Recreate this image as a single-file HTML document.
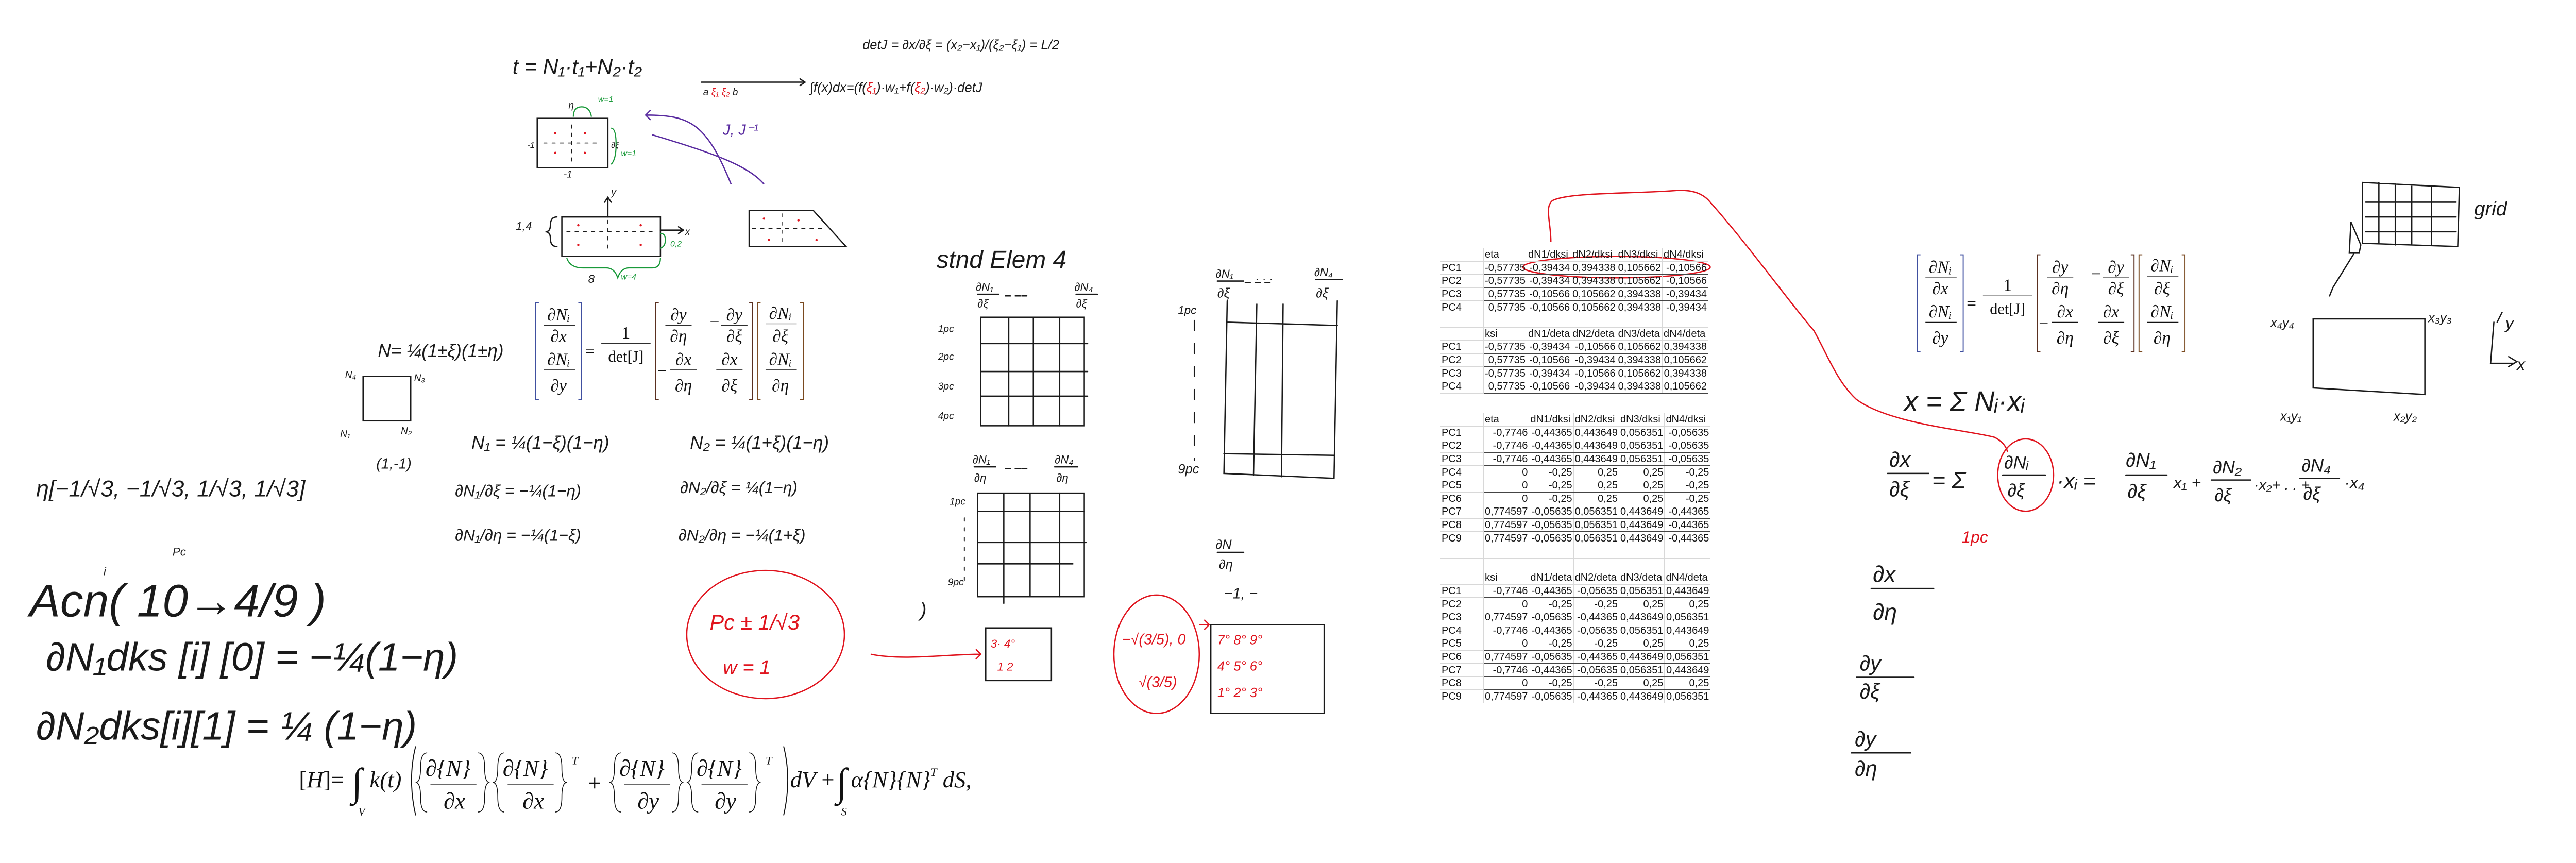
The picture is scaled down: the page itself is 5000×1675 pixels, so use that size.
<!DOCTYPE html>
<html><head><meta charset="utf-8">
<style>
html,body{margin:0;padding:0;background:#fff;}
body{width:5000px;height:1675px;overflow:hidden;position:relative;}
svg{position:absolute;left:0;top:0;}
.hw{font-family:"Liberation Sans",sans-serif;font-style:italic;fill:#1a1a1a;}
.tm{font-family:"Liberation Serif",serif;fill:#111;}
.r{fill:#e0141e;}
.g{fill:#1a9a3a;}
table{position:absolute;border-collapse:collapse;font-family:"Liberation Sans Narrow","Liberation Sans",sans-serif;font-size:20px;color:#111;}
td{height:24.6px;padding:0 2px;border:1px solid #d8d8d8;text-align:right;white-space:nowrap;line-height:24px;}
td.v{border-left:1.5px solid #333;border-bottom:1px solid #444;}
td.l{text-align:left;}
td:nth-child(1){width:79px;}
td:nth-child(2){width:79px;}
td:nth-child(3){width:80px;}
td:nth-child(4){width:81px;}
td:nth-child(5){width:80px;}
td:nth-child(6){width:84px;}
</style></head><body>
<svg width="5000" height="1675" viewBox="0 0 1568 525" preserveAspectRatio="none" xmlns="http://www.w3.org/2000/svg">
<g fill="none" stroke="#1a1a1a" stroke-width="0.8" stroke-linecap="round">
<rect x="327" y="72" width="43" height="30"/>
<path d="M348,76 v22 M331,87 h35" stroke-dasharray="2,3" stroke-width="0.5"/>
<rect x="342" y="132" width="60" height="24"/>
<path d="M345,141 h55 M370,134 v20" stroke-dasharray="2,3" stroke-width="0.5"/>
<path d="M370,132 v-12 M368,123 l2,-3 l2,3 M402,140 h14 M413,138 l3,2 l-3,2"/>
<path d="M339,132 q-4,0 -4,5 q0,4 -3,4 q3,0 3,4 q0,5 4,5"/>
<path d="M456,128 L495,128 L515,150 L456,150 Z"/>
<path d="M476,130 v18 M458,139 h45" stroke-dasharray="2,3" stroke-width="0.5"/>
<rect x="221" y="229" width="29" height="27"/>
<path d="M427,50 L490,50 M487,48 l3,2 l-3,2"/>
<rect x="597" y="193" width="63" height="66"/>
<path d="M614,193 v66 M629,193 v66 M645,193 v66 M597,209 h65 M597,226 h65 M597,241 h65"/>
<rect x="595" y="300" width="65" height="63"/>
<path d="M611,300 v67 M627,300 v63 M645,300 v63 M595,311 h65 M595,330 h66 M595,343 h58"/>
<path d="M587,315 v40" stroke-dasharray="2,4" stroke-width="0.6"/>
<path d="M747,183 L745,288 L812,291 L814,183 M747,196 L814,198 M745,276 L812,277 M765,185 L763,289 M781,185 L780,290" />
<path d="M727,195 L727,280" stroke-dasharray="6,8"/>
<path d="M595,179 h13 M655,179 h13 M593,284 h13 M642,284 h14 M741,171 h16 M801,170 h16 M741,336 h16"/>
<path d="M612,180 h3 M618,180 h3 M622,180 h3 M612,285 h3 M618,285 h3 M622,285 h3 M758,172 h3 M764,172 h3 M770,172 h3"/>
<rect x="600" y="382" width="40" height="32"/>
<rect x="737" y="380" width="69" height="54"/>
<path d="M1408,194 L1476,194 L1476,240 L1408,236 Z"/>
<path d="M1438,111 L1497,114 L1496,150 L1438,148 Z M1448,111 v37 M1458,112 v37 M1468,113 v36 M1480,113 v36 M1440,123 h55 M1440,132 h55 M1440,141 h55 M1431,135 L1437,149 L1436,154 L1430,154 Z M1433,154 L1420,175 L1418,180"/>
<path d="M1518,196 L1516,221 L1530,221 M1527,217 l5,3 l-5,3 M1520,196 l3,-6"/>
<path d="M1149,288 h25 M1219,289 h26 M1294,289 h25 M1346,292 h24 M1400,291 h24 M1139,358 h38 M1130,412 h35 M1127,458 h36"/>
</g>
<g fill="none" stroke="#1a9a3a" stroke-width="0.7">
<path d="M349,71 q0,-6 5,-6 q5,0 6,6 M372,78 q3,0 3,10 q0,9 -3,12"/>
<path d="M345,157 q2,6 10,6 l14,0 q5,0 7,6 q2,-6 7,-6 l14,0 q5,0 5,-6 M402,142 q3,0 3,4 q0,4 -3,5"/>
</g>
<text class="g hw" x="364" y="62" font-size="5">w=1</text>
<text class="g hw" x="378" y="95" font-size="5">w=1</text>
<text class="g hw" x="378" y="170" font-size="5">w=4</text>
<text class="g hw" x="408" y="150" font-size="5">0,2</text>
<g class="r">
<circle cx="338" cy="81" r="0.7"/><circle cx="356" cy="81" r="0.7"/><circle cx="338" cy="93" r="0.7"/><circle cx="356" cy="93" r="0.7"/>
<circle cx="352" cy="137" r="0.7"/><circle cx="390" cy="137" r="0.7"/><circle cx="352" cy="149" r="0.7"/><circle cx="390" cy="149" r="0.7"/>
<circle cx="465" cy="133" r="0.7"/><circle cx="486" cy="134" r="0.7"/><circle cx="468" cy="146" r="0.7"/><circle cx="497" cy="146" r="0.7"/>
</g>
<g fill="none" stroke="#5a2ca0" stroke-width="0.8">
<path d="M393,70 C420,70 430,75 445,112 M396,67 l-3,3 l3,3"/>
<path d="M397,82 C430,92 455,100 465,112"/>
</g>
<text x="440" y="82" font-size="9" class="hw" style="fill:#5a2ca0">J, J⁻¹</text>
<g fill="none" stroke="#e0141e" stroke-width="0.8">
<ellipse cx="466" cy="386" rx="48" ry="39"/>
<path d="M530,398 C550,402 575,398 597,398 M594,395 l3,3 l-3,3"/>
<ellipse cx="704" cy="398" rx="26" ry="36"/>
<path d="M730,380 l6,0 M733,377 l3,3 l-3,3"/>
<ellipse cx="984" cy="162.5" rx="57" ry="6.5"/>
<path d="M944,147 C944,135 940,126 945,122 C955,117 990,118 1019,116 C1030,115 1037,118 1041,123 C1065,150 1090,185 1104,201 C1112,215 1118,232 1130,243 C1150,258 1200,262 1214,266 C1218,268 1221,271 1222,275"/>
<ellipse cx="1233" cy="289" rx="17" ry="22"/>
</g>
<g class="hw">
<text x="312" y="45" font-size="13">t = N₁·t₁+N₂·t₂</text>
<text x="525" y="30" font-size="8">detJ = ∂x/∂ξ = (x₂−x₁)/(ξ₂−ξ₁) = L/2</text>
<text x="428" y="58" font-size="6">a <tspan class="r">ξ₁</tspan>   <tspan class="r">ξ₂</tspan>   b</text>
<text x="493" y="56" font-size="8">∫f(x)dx=(f(<tspan class="r">ξ₁</tspan>)·w₁+f(<tspan class="r">ξ₂</tspan>)·w₂)·detJ</text>
<text x="321" y="90" font-size="5">-1</text>
<text x="343" y="108" font-size="6">-1</text>
<text x="372" y="90" font-size="5">∂ξ</text>
<text x="346" y="66" font-size="6">η</text>
<text x="372" y="119" font-size="6">y</text>
<text x="417" y="143" font-size="6">x</text>
<text x="314" y="140" font-size="7">1,4</text>
<text x="358" y="172" font-size="7">8</text>
<text x="230" y="217" font-size="11">N= ¼(1±ξ)(1±η)</text>
<text x="210" y="230" font-size="6">N₄</text>
<text x="252" y="232" font-size="6">N₃</text>
<text x="207" y="266" font-size="6">N₁</text>
<text x="244" y="264" font-size="6">N₂</text>
<text x="229" y="285" font-size="9">(1,-1)</text>
<text x="22" y="302" font-size="14">η[−1/√3, −1/√3, 1/√3, 1/√3]</text>
<text x="287" y="273" font-size="11">N₁ = ¼(1−ξ)(1−η)</text>
<text x="420" y="273" font-size="11">N₂ = ¼(1+ξ)(1−η)</text>
<text x="277" y="302" font-size="10">∂N₁/∂ξ = −¼(1−η)</text>
<text x="414" y="300" font-size="10">∂N₂/∂ξ = ¼(1−η)</text>
<text x="277" y="329" font-size="10">∂N₁/∂η = −¼(1−ξ)</text>
<text x="413" y="329" font-size="10">∂N₂/∂η = −¼(1+ξ)</text>
<text x="105" y="338" font-size="7">Pc</text>
<text x="63" y="350" font-size="7">i</text>
<text x="18" y="375" font-size="28">Acn( 10→4/9 )</text>
<text x="28" y="408" font-size="24">∂N₁dks [i] [0] = −¼(1−η)</text>
<text x="22" y="450" font-size="24">∂N₂dks[i][1] = ¼ (1−η)</text>
<text x="570" y="163" font-size="15">stnd Elem 4</text>
<text x="594" y="177" font-size="7">∂N₁</text><text x="595" y="187" font-size="7">∂ξ</text>
<text x="654" y="177" font-size="7">∂N₄</text><text x="655" y="187" font-size="7">∂ξ</text>
<text x="571" y="202" font-size="6">1pc</text>
<text x="571" y="219" font-size="6">2pc</text>
<text x="571" y="237" font-size="6">3pc</text>
<text x="571" y="255" font-size="6">4pc</text>
<text x="592" y="282" font-size="7">∂N₁</text><text x="593" y="293" font-size="7">∂η</text>
<text x="642" y="282" font-size="7">∂N₄</text><text x="643" y="293" font-size="7">∂η</text>
<text x="578" y="307" font-size="6">1pc</text>
<text x="577" y="356" font-size="6">9pc</text>
<text x="560" y="375" font-size="12">)</text>
<text x="740" y="169" font-size="7">∂N₁</text><text x="741" y="181" font-size="8">∂ξ</text>
<text x="764" y="172" font-size="7">· · ·</text>
<text x="800" y="168" font-size="7">∂N₄</text><text x="801" y="181" font-size="8">∂ξ</text>
<text x="717" y="191" font-size="7">1pc</text>
<text x="717" y="288" font-size="8">9pc</text>
<text x="740" y="334" font-size="8">∂N</text><text x="742" y="346" font-size="8">∂η</text>
<text x="745" y="364" font-size="9">−1,  −</text>
<text x="1506" y="131" font-size="12">grid</text>
<text x="1525" y="200" font-size="10">y</text>
<text x="1532" y="225" font-size="10">x</text>
<text x="1382" y="199" font-size="8">x₄y₄</text>
<text x="1478" y="196" font-size="8">x₃y₃</text>
<text x="1388" y="256" font-size="8">x₁y₁</text>
<text x="1457" y="256" font-size="8">x₂y₂</text>
<text x="1159" y="250" font-size="17">x = Σ Nᵢ·xᵢ</text>
<text x="1150" y="284" font-size="13">∂x</text><text x="1150" y="302" font-size="13">∂ξ</text>
<text x="1176" y="297" font-size="14">= Σ</text>
<text x="1220" y="285" font-size="11">∂Nᵢ</text><text x="1222" y="302" font-size="11">∂ξ</text>
<text x="1252" y="297" font-size="13">·xᵢ =</text>
<text x="1294" y="284" font-size="12">∂N₁</text><text x="1295" y="303" font-size="12">∂ξ</text>
<text x="1323" y="297" font-size="10">x₁ +</text>
<text x="1347" y="288" font-size="11">∂N₂</text><text x="1348" y="305" font-size="11">∂ξ</text>
<text x="1372" y="298" font-size="9">·x₂+ . . +</text>
<text x="1401" y="287" font-size="11">∂N₄</text><text x="1402" y="304" font-size="11">∂ξ</text>
<text x="1427" y="297" font-size="10">·x₄</text>
<text x="1140" y="354" font-size="14">∂x</text><text x="1140" y="377" font-size="14">∂η</text>
<text x="1132" y="408" font-size="13">∂y</text><text x="1132" y="425" font-size="13">∂ξ</text>
<text x="1129" y="454" font-size="13">∂y</text><text x="1129" y="472" font-size="13">∂η</text>
</g>
<g class="hw" style="fill:#e0141e">
<text x="432" y="383" font-size="13">Pc ± 1/√3</text>
<text x="440" y="410" font-size="12">w = 1</text>
<text x="603" y="394" font-size="7">3· 4°</text>
<text x="607" y="408" font-size="7">1  2</text>
<text x="683" y="392" font-size="9">−√(3/5), 0</text>
<text x="693" y="418" font-size="9">√(3/5)</text>
<text x="741" y="392" font-size="8">7° 8° 9°</text>
<text x="741" y="408" font-size="8">4° 5° 6°</text>
<text x="741" y="424" font-size="8">1° 2° 3°</text>
<text x="1194" y="330" font-size="10">1pc</text>
</g>

<g class="tm" font-size="10.5" font-style="italic" text-anchor="middle">
<path d="M328,184 h-2 v59 h2 M352,184 h2 v59 h-2" fill="none" stroke="#4050a0" stroke-width="0.6"/>
<text x="340" y="195">∂Nᵢ</text><path d="M331,198 h19" stroke="#111" stroke-width="0.4"/><text x="340" y="208">∂x</text>
<text x="340" y="222">∂Nᵢ</text><path d="M331,225 h19" stroke="#111" stroke-width="0.4"/><text x="340" y="238">∂y</text>
<text x="359" y="217" font-style="normal">=</text>
<text x="381" y="206" font-style="normal">1</text><path d="M366,209 h30" stroke="#111" stroke-width="0.4"/><text x="381" y="220" font-style="normal" font-size="9.5">det[J]</text>
<path d="M401,184 h-2 v59 h2 M456,184 h2 v59 h-2" fill="none" stroke="#5a3020" stroke-width="0.6"/>
<text x="413" y="195">∂y</text><path d="M405,198 h16" stroke="#111" stroke-width="0.4"/><text x="413" y="208">∂η</text>
<text x="435" y="199" font-style="normal">−</text>
<text x="447" y="195">∂y</text><path d="M439,198 h16" stroke="#111" stroke-width="0.4"/><text x="447" y="208">∂ξ</text>
<text x="403" y="229" font-style="normal">−</text>
<text x="416" y="222">∂x</text><path d="M408,225 h16" stroke="#111" stroke-width="0.4"/><text x="416" y="238">∂η</text>
<text x="444" y="222">∂x</text><path d="M436,225 h16" stroke="#111" stroke-width="0.4"/><text x="444" y="238">∂ξ</text>
<path d="M463,184 h-2 v59 h2 M487,184 h2 v59 h-2" fill="none" stroke="#7a4a20" stroke-width="0.6"/>
<text x="475" y="194">∂Nᵢ</text><path d="M466,197 h19" stroke="#111" stroke-width="0.4"/><text x="475" y="208">∂ξ</text>
<text x="475" y="222">∂Nᵢ</text><path d="M466,225 h19" stroke="#111" stroke-width="0.4"/><text x="475" y="238">∂η</text>
</g>
<g class="tm" font-size="10.5" font-style="italic" text-anchor="middle" transform="translate(841,-29)">
<path d="M328,184 h-2 v59 h2 M352,184 h2 v59 h-2" fill="none" stroke="#4050a0" stroke-width="0.6"/>
<text x="340" y="195">∂Nᵢ</text><path d="M331,198 h19" stroke="#111" stroke-width="0.4"/><text x="340" y="208">∂x</text>
<text x="340" y="222">∂Nᵢ</text><path d="M331,225 h19" stroke="#111" stroke-width="0.4"/><text x="340" y="238">∂y</text>
<text x="359" y="217" font-style="normal">=</text>
<text x="381" y="206" font-style="normal">1</text><path d="M366,209 h30" stroke="#111" stroke-width="0.4"/><text x="381" y="220" font-style="normal" font-size="9.5">det[J]</text>
<path d="M401,184 h-2 v59 h2 M456,184 h2 v59 h-2" fill="none" stroke="#5a3020" stroke-width="0.6"/>
<text x="413" y="195">∂y</text><path d="M405,198 h16" stroke="#111" stroke-width="0.4"/><text x="413" y="208">∂η</text>
<text x="435" y="199" font-style="normal">−</text>
<text x="447" y="195">∂y</text><path d="M439,198 h16" stroke="#111" stroke-width="0.4"/><text x="447" y="208">∂ξ</text>
<text x="403" y="229" font-style="normal">−</text>
<text x="416" y="222">∂x</text><path d="M408,225 h16" stroke="#111" stroke-width="0.4"/><text x="416" y="238">∂η</text>
<text x="444" y="222">∂x</text><path d="M436,225 h16" stroke="#111" stroke-width="0.4"/><text x="444" y="238">∂ξ</text>
<path d="M463,184 h-2 v59 h2 M487,184 h2 v59 h-2" fill="none" stroke="#7a4a20" stroke-width="0.6"/>
<text x="475" y="194">∂Nᵢ</text><path d="M466,197 h19" stroke="#111" stroke-width="0.4"/><text x="475" y="208">∂ξ</text>
<text x="475" y="222">∂Nᵢ</text><path d="M466,225 h19" stroke="#111" stroke-width="0.4"/><text x="475" y="238">∂η</text>
</g>
<g class="tm" font-size="14" font-style="italic">
<text x="182" y="479" font-style="normal">[<tspan font-style="italic">H</tspan>]=</text>
<text x="214" y="484" font-size="24" font-style="normal">∫</text>
<text x="218" y="496" font-size="7">V</text>
<text x="225" y="479">k(t)</text>
<path d="M253,454 q-5,20 0,42 M477,454 q5,20 0,42" fill="none" stroke="#111" stroke-width="0.6"/>
<text x="259" y="472">∂{N}</text><path d="M262,477 h28" stroke="#111" stroke-width="0.5"/><text x="270" y="492">∂x</text>
<text x="306" y="472">∂{N}</text><path d="M309,477 h28" stroke="#111" stroke-width="0.5"/><text x="318" y="492">∂x</text>
<text x="348" y="465" font-size="7">T</text>
<text x="358" y="481" font-style="normal">+</text>
<text x="377" y="472">∂{N}</text><path d="M380,477 h28" stroke="#111" stroke-width="0.5"/><text x="388" y="492">∂y</text>
<text x="424" y="472">∂{N}</text><path d="M427,477 h28" stroke="#111" stroke-width="0.5"/><text x="435" y="492">∂y</text>
<text x="466" y="465" font-size="7">T</text>
<path d="M260,458 q-4,0 -4,9 q0,9 -3,9 q3,0 3,9 q0,9 4,9 M291,458 q4,0 4,9 q0,9 3,9 q-3,0 -3,9 q0,9 -4,9 M307,458 q-4,0 -4,9 q0,9 -3,9 q3,0 3,9 q0,9 4,9 M338,458 q4,0 4,9 q0,9 3,9 q-3,0 -3,9 q0,9 -4,9 M378,458 q-4,0 -4,9 q0,9 -3,9 q3,0 3,9 q0,9 4,9 M409,458 q4,0 4,9 q0,9 3,9 q-3,0 -3,9 q0,9 -4,9 M425,458 q-4,0 -4,9 q0,9 -3,9 q3,0 3,9 q0,9 4,9 M456,458 q4,0 4,9 q0,9 3,9 q-3,0 -3,9 q0,9 -4,9" fill="none" stroke="#111" stroke-width="0.5"/>
<text x="481" y="479">dV</text>
<text x="500" y="479" font-style="normal">+</text>
<text x="509" y="484" font-size="24" font-style="normal">∫</text>
<text x="512" y="496" font-size="7">S</text>
<text x="518" y="479">α{N}{N}<tspan font-size="7" dy="-7">T</tspan><tspan dy="7"> dS,</tspan></text>
</g>
</svg>

<table style="left:2795px;top:481px">
<tr><td class="l"></td><td class="l">eta</td><td class="l">dN1/dksi</td><td class="l">dN2/dksi</td><td class="l">dN3/dksi</td><td class="l">dN4/dksi</td></tr>
<tr><td class="l">PC1</td><td class="v">-0,57735</td><td class="v">-0,39434</td><td class="v">0,394338</td><td class="v">0,105662</td><td class="v">-0,10566</td></tr>
<tr><td class="l">PC2</td><td class="v">-0,57735</td><td class="v">-0,39434</td><td class="v">0,394338</td><td class="v">0,105662</td><td class="v">-0,10566</td></tr>
<tr><td class="l">PC3</td><td class="v">0,57735</td><td class="v">-0,10566</td><td class="v">0,105662</td><td class="v">0,394338</td><td class="v">-0,39434</td></tr>
<tr><td class="l">PC4</td><td class="v">0,57735</td><td class="v">-0,10566</td><td class="v">0,105662</td><td class="v">0,394338</td><td class="v">-0,39434</td></tr>
<tr><td></td><td></td><td></td><td></td><td></td><td></td></tr>
<tr><td class="l"></td><td class="l">ksi</td><td class="l">dN1/deta</td><td class="l">dN2/deta</td><td class="l">dN3/deta</td><td class="l">dN4/deta</td></tr>
<tr><td class="l">PC1</td><td class="v">-0,57735</td><td class="v">-0,39434</td><td class="v">-0,10566</td><td class="v">0,105662</td><td class="v">0,394338</td></tr>
<tr><td class="l">PC2</td><td class="v">0,57735</td><td class="v">-0,10566</td><td class="v">-0,39434</td><td class="v">0,394338</td><td class="v">0,105662</td></tr>
<tr><td class="l">PC3</td><td class="v">-0,57735</td><td class="v">-0,39434</td><td class="v">-0,10566</td><td class="v">0,105662</td><td class="v">0,394338</td></tr>
<tr><td class="l">PC4</td><td class="v">0,57735</td><td class="v">-0,10566</td><td class="v">-0,39434</td><td class="v">0,394338</td><td class="v">0,105662</td></tr>
</table>

<table style="left:2795px;top:801px">
<tr><td class="l"></td><td class="l">eta</td><td class="l">dN1/dksi</td><td class="l">dN2/dksi</td><td class="l">dN3/dksi</td><td class="l">dN4/dksi</td></tr>
<tr><td class="l">PC1</td><td class="v">-0,7746</td><td class="v">-0,44365</td><td class="v">0,443649</td><td class="v">0,056351</td><td class="v">-0,05635</td></tr>
<tr><td class="l">PC2</td><td class="v">-0,7746</td><td class="v">-0,44365</td><td class="v">0,443649</td><td class="v">0,056351</td><td class="v">-0,05635</td></tr>
<tr><td class="l">PC3</td><td class="v">-0,7746</td><td class="v">-0,44365</td><td class="v">0,443649</td><td class="v">0,056351</td><td class="v">-0,05635</td></tr>
<tr><td class="l">PC4</td><td class="v">0</td><td class="v">-0,25</td><td class="v">0,25</td><td class="v">0,25</td><td class="v">-0,25</td></tr>
<tr><td class="l">PC5</td><td class="v">0</td><td class="v">-0,25</td><td class="v">0,25</td><td class="v">0,25</td><td class="v">-0,25</td></tr>
<tr><td class="l">PC6</td><td class="v">0</td><td class="v">-0,25</td><td class="v">0,25</td><td class="v">0,25</td><td class="v">-0,25</td></tr>
<tr><td class="l">PC7</td><td class="v">0,774597</td><td class="v">-0,05635</td><td class="v">0,056351</td><td class="v">0,443649</td><td class="v">-0,44365</td></tr>
<tr><td class="l">PC8</td><td class="v">0,774597</td><td class="v">-0,05635</td><td class="v">0,056351</td><td class="v">0,443649</td><td class="v">-0,44365</td></tr>
<tr><td class="l">PC9</td><td class="v">0,774597</td><td class="v">-0,05635</td><td class="v">0,056351</td><td class="v">0,443649</td><td class="v">-0,44365</td></tr>
<tr><td></td><td></td><td></td><td></td><td></td><td></td></tr>
<tr><td></td><td></td><td></td><td></td><td></td><td></td></tr>
<tr><td class="l"></td><td class="l">ksi</td><td class="l">dN1/deta</td><td class="l">dN2/deta</td><td class="l">dN3/deta</td><td class="l">dN4/deta</td></tr>
<tr><td class="l">PC1</td><td class="v">-0,7746</td><td class="v">-0,44365</td><td class="v">-0,05635</td><td class="v">0,056351</td><td class="v">0,443649</td></tr>
<tr><td class="l">PC2</td><td class="v">0</td><td class="v">-0,25</td><td class="v">-0,25</td><td class="v">0,25</td><td class="v">0,25</td></tr>
<tr><td class="l">PC3</td><td class="v">0,774597</td><td class="v">-0,05635</td><td class="v">-0,44365</td><td class="v">0,443649</td><td class="v">0,056351</td></tr>
<tr><td class="l">PC4</td><td class="v">-0,7746</td><td class="v">-0,44365</td><td class="v">-0,05635</td><td class="v">0,056351</td><td class="v">0,443649</td></tr>
<tr><td class="l">PC5</td><td class="v">0</td><td class="v">-0,25</td><td class="v">-0,25</td><td class="v">0,25</td><td class="v">0,25</td></tr>
<tr><td class="l">PC6</td><td class="v">0,774597</td><td class="v">-0,05635</td><td class="v">-0,44365</td><td class="v">0,443649</td><td class="v">0,056351</td></tr>
<tr><td class="l">PC7</td><td class="v">-0,7746</td><td class="v">-0,44365</td><td class="v">-0,05635</td><td class="v">0,056351</td><td class="v">0,443649</td></tr>
<tr><td class="l">PC8</td><td class="v">0</td><td class="v">-0,25</td><td class="v">-0,25</td><td class="v">0,25</td><td class="v">0,25</td></tr>
<tr><td class="l">PC9</td><td class="v">0,774597</td><td class="v">-0,05635</td><td class="v">-0,44365</td><td class="v">0,443649</td><td class="v">0,056351</td></tr>
</table>
</body></html>
